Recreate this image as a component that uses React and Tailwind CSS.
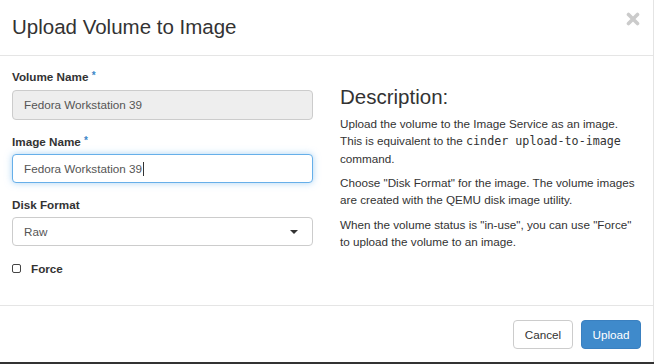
export default function App() {
  const font = { fontFamily: '"Liberation Sans", Arial, Helvetica, sans-serif' };
  return (
    <div className="w-[654px] h-[364px] bg-white overflow-hidden flex flex-col text-[#333]" style={font}>
      <div className="flex-1 flex flex-col border-r border-r-[#e4e4e4]">
        <div className="h-[56px] border-b border-b-[#e5e5e5] flex items-start justify-between pl-[12px] pr-[13px]">
          <h4 className="text-[20.5px] leading-[24px] mt-[15px] text-[#333]">Upload Volume to Image</h4>
          <svg width="14" height="14" viewBox="0 0 14 14" className="mt-[12px]">
            <path d="M2.5 2.5 L11.5 11.5 M11.5 2.5 L2.5 11.5" stroke="#cbcbcb" strokeWidth="3.6" strokeLinecap="round" />
          </svg>
        </div>
        <div className="flex-1 grid grid-cols-[301px_301px] gap-x-[27px] pl-[12px] pt-[12px]">
          <div className="flex flex-col">
            <div className="flex flex-col mb-[13px]">
              <label className="text-[11.7px] font-bold leading-[17px] mb-[5px]">
                Volume Name <sup className="text-[#3b87c8] text-[10px] relative -top-[2px]">*</sup>
              </label>
              <div className="h-[30px] rounded-[4px] border border-[#ccc] bg-[#eee] flex items-center px-[11px] text-[11.7px] text-[#555]">
                Fedora Workstation 39
              </div>
            </div>
            <div className="flex flex-col mb-[13px]">
              <label className="text-[11.7px] font-bold leading-[17px] mb-[4px]">
                Image Name <sup className="text-[#3b87c8] text-[10px] relative -top-[2px]">*</sup>
              </label>
              <div className="h-[29px] rounded-[4px] border border-[#66afe9] bg-white flex items-center px-[11px] text-[11.7px] text-[#555] shadow-[0_0_7px_rgba(102,175,233,0.55)]">
                Fedora Workstation 39<span className="inline-block w-px h-[14px] bg-[#333] ml-px"></span>
              </div>
            </div>
            <div className="flex flex-col mb-[14px]">
              <label className="text-[11.7px] font-bold leading-[17px] mb-[4px]">Disk Format</label>
              <div className="h-[29px] rounded-[4px] border border-[#ccc] bg-white flex items-center justify-between pl-[11px] pr-[14px] text-[11.7px] text-[#555]">
                <span>Raw</span>
                <svg width="8" height="4" viewBox="0 0 8 4">
                  <path d="M0 0 L8 0 L4 4 Z" fill="#333" />
                </svg>
              </div>
            </div>
            <div className="flex items-center h-[17px]">
              <span className="w-[9px] h-[9px] border border-[#444] rounded-[2px] bg-white"></span>
              <span className="ml-[10px] text-[11.7px] font-bold">Force</span>
            </div>
          </div>
          <div className="pt-[17px] text-[11.7px] leading-[17px] text-[#333]">
            <h3 className="text-[20.5px] leading-[23px] mb-[7px]">Description:</h3>
            <p className="mb-[7px]">
              Upload the volume to the Image Service as an image. This is equivalent to the{" "}
              <code className="text-[11.7px]" style={{ fontFamily: '"DejaVu Sans Mono", monospace' }}>cinder upload-to-image</code>{" "}
              command.
            </p>
            <p className="mb-[8px]">
              Choose "Disk Format" for the image. The volume images are created with the QEMU disk image utility.
            </p>
            <p>
              When the volume status is "in-use", you can use "Force" to upload the volume to an image.
            </p>
          </div>
        </div>
        <div className="h-[57px] border-t border-t-[#e5e5e5] flex items-start justify-end gap-[8px] pr-[12px] pt-[14px]">
          <button className="w-[60px] h-[29px] rounded-[4px] border border-[#ccc] bg-white text-[11.7px] text-[#333]">Cancel</button>
          <button className="w-[60px] h-[29px] rounded-[4px] border border-[#3a80c0] bg-[#3f8acb] text-[11.7px] text-white">Upload</button>
        </div>
      </div>
      <div className="h-[2px] bg-[#333]"></div>
    </div>
  );
}
